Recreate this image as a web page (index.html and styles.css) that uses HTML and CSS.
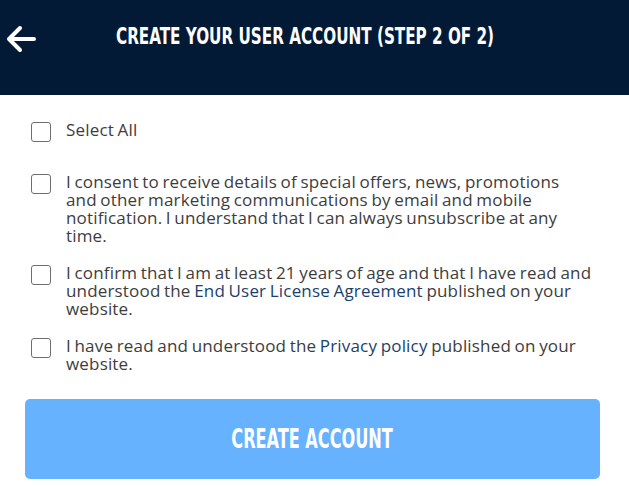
FILE: index.html
```html
<!DOCTYPE html>
<html>
<head>
<meta charset="utf-8">
<link rel="stylesheet" href="styles.css">
</head>
<body>
<header class="topbar">
  <span class="back" aria-label="Back">
    <svg width="31" height="28" viewBox="0 0 31 28"><path d="M29 14H4M15 3L4 14l11 11" fill="none" stroke="#fff" stroke-width="4" stroke-linecap="round" stroke-linejoin="round"/></svg>
  </span>
  <h1 class="title"><span class="squeeze">CREATE YOUR USER ACCOUNT (STEP 2 OF 2)</span></h1>
</header>
<main class="content">
  <ul class="checks">
    <li class="row row-first"><span class="box"></span><span class="label">Select All</span></li>
    <li class="row"><span class="box"></span><span class="label">I consent to receive details of special offers, news, promotions and other marketing communications by email and mobile notification. I understand that I can always unsubscribe at any time.</span></li>
    <li class="row"><span class="box"></span><span class="label">I confirm that I am at least 21 years of age and that I have read and understood the <a class="link">End User License Agreement</a> published on your website.</span></li>
    <li class="row"><span class="box"></span><span class="label">I have read and understood the <a class="link">Privacy policy</a> published on your website.</span></li>
  </ul>
  <button class="cta"><span class="cta-text">CREATE ACCOUNT</span></button>
</main>
</body>
</html>
```
FILE: styles.css
```css
* { box-sizing: border-box; }
html, body { margin: 0; padding: 0; background: #fff; }
body { width: 629px; height: 486px; overflow: hidden; font-family: "Open Sans", "Liberation Sans", sans-serif; }
.topbar {
  height: 95px;
  background: #021a36;
  display: flex;
  align-items: flex-start;
  padding: 25px 0 0 5px;
}
.back { display: flex; width: 31px; height: 28px; }
.title {
  margin: -3px 0 0 80px;
  font-family: "DejaVu Sans Condensed", "DejaVu Sans", sans-serif;
  font-weight: bold;
  font-size: 23px;
  line-height: 28px;
  color: #fff;
  white-space: nowrap;
}
.squeeze {
  display: inline-block;
  transform: scaleX(0.735);
  transform-origin: left center;
}
.content { padding: 0 29px 0 25px; }
.checks { list-style: none; margin: 0; padding: 26px 0 0 6px; }
.row { display: flex; gap: 15px; align-items: flex-start; margin-bottom: 19px; }
.row-first { margin-bottom: 31px; }
.box {
  flex: 0 0 20px;
  width: 20px; height: 20px;
  border: 1.5px solid #6e6e6e;
  border-radius: 3px;
  margin-top: 1px;
}
.label {
  width: 527px;
  font-size: 17px;
  line-height: 18px;
  color: #3d3d3d;
  letter-spacing: 0.17px;
  word-spacing: -1px;
}
.link { color: #1b3f6e; display: inline-block; line-height: 18px; }
.cta {
  display: flex;
  justify-content: center;
  align-items: center;
  width: 575px;
  height: 80px;
  margin-top: 26px;
  padding: 0;
  border: 0;
  border-radius: 5px;
  background: #66b2fe;
  color: #fff;
  font-family: "DejaVu Sans Condensed", "DejaVu Sans", sans-serif;
  font-weight: bold;
  font-size: 26px;
}
.cta-text {
  display: inline-block;
  transform: scaleX(0.69);
}
```
